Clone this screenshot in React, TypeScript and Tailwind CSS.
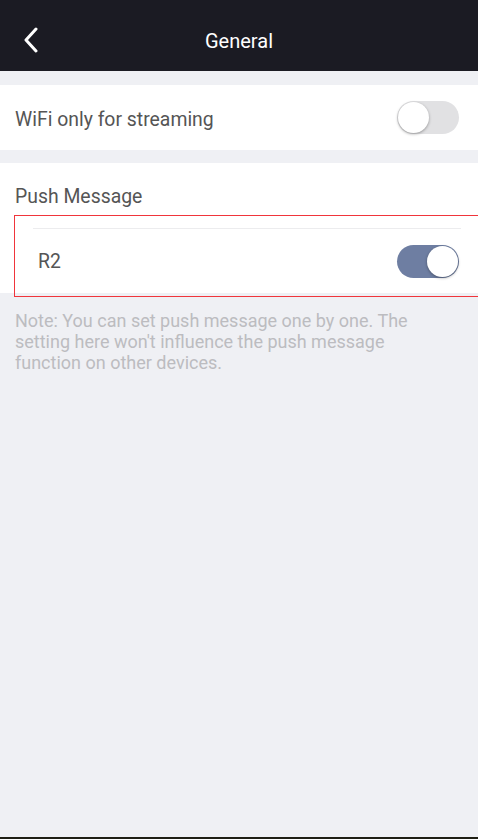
import { useState } from "react";

function Toggle({ on, onClick }: { on: boolean; onClick: () => void }) {
  return (
    <button
      onClick={onClick}
      className={
        on
          ? "relative w-[62px] h-[33px] rounded-full bg-[#6e7ea2] shrink-0"
          : "relative w-[62px] h-[33px] rounded-full bg-[#e1e1e3] shrink-0"
      }
    >
      <span
        className={
          on
            ? "absolute top-[1px] right-[1px] w-[31px] h-[31px] rounded-full bg-white shadow-[0_1px_3px_rgba(0,0,0,0.35)]"
            : "absolute top-[1px] left-[1px] w-[31px] h-[31px] rounded-full bg-white shadow-[0_1px_3px_rgba(0,0,0,0.35)]"
        }
      />
    </button>
  );
}

export default function App() {
  const [wifiOnly, setWifiOnly] = useState(false);
  const [r2, setR2] = useState(true);

  return (
    <div
      className="w-[478px] h-[839px] flex flex-col bg-[#eff0f4]"
      style={{ fontFamily: "Roboto, 'Liberation Sans', sans-serif" }}
    >
      {/* header */}
      <div className="relative h-[71px] bg-[#1b1b23] flex items-center justify-center shrink-0">
        <button className="absolute left-[20px] top-[26px] w-[22px] h-[28px] flex items-center justify-center">
          <svg width="16" height="26" viewBox="0 0 16 26" fill="none">
            <path
              d="M13 2 L3 13 L13 24"
              stroke="#ffffff"
              strokeWidth="3"
              strokeLinecap="round"
              strokeLinejoin="round"
            />
          </svg>
        </button>
        <h1 className="text-white text-[20px] mt-[10px]">General</h1>
      </div>

      <div className="mt-[14px] bg-white h-[65px] flex items-center justify-between pl-[15px] pr-[19px]">
        <span className="text-[19.4px] text-[#555] pt-[4px]">WiFi only for streaming</span>
        <Toggle on={wifiOnly} onClick={() => setWifiOnly(!wifiOnly)} />
      </div>

      <div className="mt-[13px] bg-white">
        <div className="h-[52px] flex items-end pl-[15px] pb-[4px]">
          <span className="text-[19.4px] text-[#555]">Push Message</span>
        </div>
        <div className="flex flex-col border border-r-0 border-[#f0353b] ml-[14px] h-[82px] -mb-[4px]">
          <div className="ml-[18px] mr-[17px] mt-[12px] border-t border-[#ececee]" />
          <div className="flex-1 flex items-center justify-between pl-[23px] pr-[19px] pb-[2px]">
            <span className="text-[19.4px] text-[#555]">R2</span>
            <Toggle on={r2} onClick={() => setR2(!r2)} />
          </div>
        </div>
      </div>

      <p className="mt-[17px] px-[15px] text-[18px] leading-[21px] text-[#bcbcc0]">
        Note: You can set push message one by one. The
        <br />
        setting here won't influence the push message
        <br />
        function on other devices.
      </p>

      <div className="flex-1" />
      <div className="h-[2px] bg-[#1e1e14] shrink-0" />
    </div>
  );
}
